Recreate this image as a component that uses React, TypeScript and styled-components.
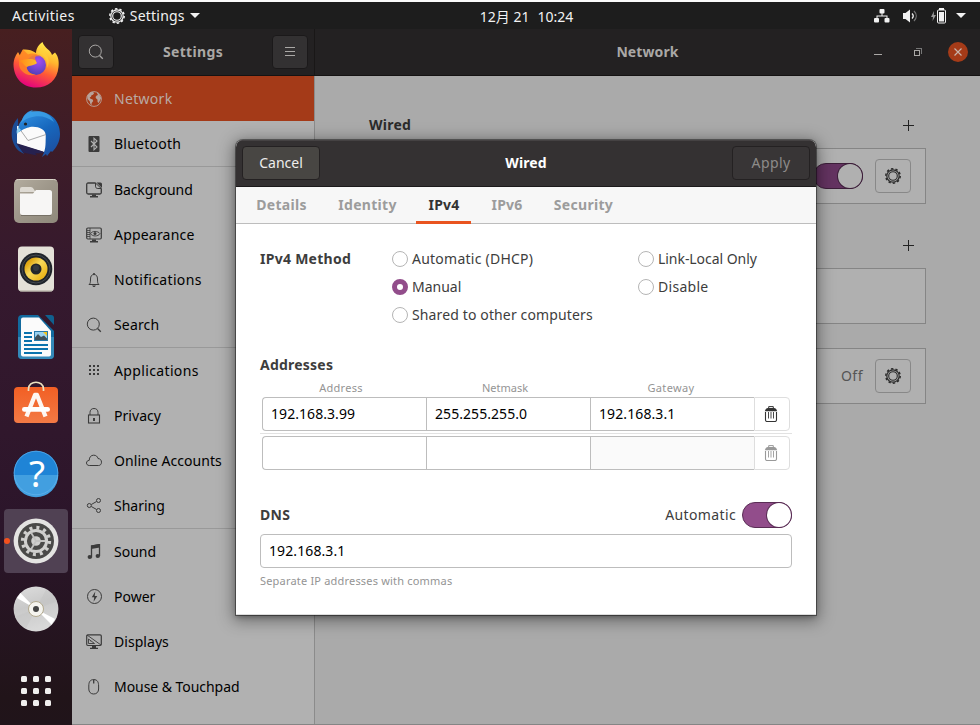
import React from 'react';
import styled, { createGlobalStyle, css } from 'styled-components';

const Global = createGlobalStyle`
  * { box-sizing: border-box; }
  html, body { margin: 0; padding: 0; }
  body {
    width: 980px; height: 725px; overflow: hidden; background: #fafafa;
    font-family: "Noto Sans", "Noto Sans CJK SC", sans-serif;
    font-size: 14px; line-height: 20px; color: #000;
  }
  svg { display: block; flex: none; }
`;

/* ---------- shared text ---------- */
const Text = styled.span<{ $track?: number }>`
  white-space: pre;
  letter-spacing: ${p => p.$track ?? 0}px;
`;
const Strong = styled(Text)`font-weight: 700;`;

/* ---------- shell ---------- */
const Desktop = styled.div`
  width: 980px; height: 725px; padding-top: 2px; position: relative; overflow: hidden;
  display: flex; flex-direction: column;
`;
const TopBar = styled.header`
  flex: none; height: 27px; background: #1d1d1d; color: #f2f2f2;
  display: grid; grid-template-columns: 1fr auto 1fr; align-items: center;
  padding: 0 14px 0 12px;
`;
const BarLeft = styled.div`display: flex; align-items: center;`;
const AppMenu = styled.div`display: flex; align-items: center; gap: 5px; margin-left: 34px;`;
const Clock = styled.div`display: flex; gap: 8px; padding: 2px 0 0 75px;`;
const BarRight = styled.div`display: flex; align-items: center; justify-content: flex-end;`;
const Tray = styled.div<{ $gap: number }>`margin-left: ${p => p.$gap}px;`;

const Workspace = styled.div`flex: 1; min-height: 0; display: flex;`;
const Dock = styled.nav`
  flex: none; width: 72px; padding: 2px 0 0; display: flex; flex-direction: column; align-items: center;
  background: linear-gradient(180deg, #471f20 0%, #3d1c28 17%, #35192e 36%, #30172c 58%, #2b152a 72%, #211419 96%, #20141a 100%);
`;
const DockSlot = styled.div`width: 72px; height: 68px; display: flex; align-items: center; justify-content: center; position: relative;`;
const DockTile = styled.div<{ $active?: boolean }>`
  width: 64px; height: 64px; border-radius: 4px;
  background: ${p => (p.$active ? '#504153' : 'transparent')};
`;
const RunDot = styled.i`
  position: absolute; left: 4px; top: 31px; width: 6px; height: 6px; border-radius: 50%; background: #f4511e;
`;
const AppsGrid = styled.div`
  display: grid; grid-template-columns: repeat(3, 6px); gap: 6px; margin-top: 33px;
`;
const AppsDot = styled.i`width: 6px; height: 6px; border-radius: 1.5px; background: #f0efee;`;

/* ---------- settings window ---------- */
const Window = styled.div`flex: 1; min-width: 0; display: flex; flex-direction: column; border-bottom: 1px solid #858585;`;
const HeaderBar = styled.div`
  flex: none; height: 47px; display: flex; background: #232122; color: #aaa8a6; border-bottom: 1px solid #151313;
`;
const SideHeader = styled.div`
  width: 243px; display: flex; align-items: center; justify-content: space-between; padding: 0 7px;
  border-right: 1px solid #191717;
`;
const HeaderButton = styled.div`
  width: 34px; height: 32px; border-radius: 4px; background: #333132; border: 1px solid #1b191a;
  box-sizing: content-box; display: grid; place-items: center; margin: 0 -1px;
`;
const MainHeader = styled.div`flex: 1; display: grid; grid-template-columns: 1fr auto 1fr; align-items: center;`;
const WindowButtons = styled.div`display: flex; align-items: center; justify-content: flex-end; gap: 32px; padding-right: 12px;`;
const CloseButton = styled.div`
  width: 20px; height: 20px; border-radius: 50%; background: #a53b18; display: grid; place-items: center; margin-left: -6px;
`;
const WindowBody = styled.div`flex: 1; min-height: 0; display: flex;`;
const Sidebar = styled.div`width: 243px; background: #b1b1b1; border-right: 1px solid #8b8b8b; overflow: hidden;`;
const SideRow = styled.div<{ $selected?: boolean; $sep?: boolean }>`
  height: ${p => (p.$sep ? 46 : 45)}px; display: flex; align-items: center; gap: 12px; padding-left: 14px;
  ${p => p.$selected && css`background: #a43a18; color: #b9aaa4;`}
  ${p => p.$sep && css`border-bottom: 1px solid #999;`}
`;
const Content = styled.div`flex: 1; background: #aaa; padding: 0 54px; color: #2b2b2b;`;
const SectionHead = styled.div<{ $h: number }>`
  height: ${p => p.$h}px; display: flex; justify-content: space-between; align-items: flex-end; padding: 0 12px 13px 0;
`;
const Panel = styled.div<{ $gap?: number }>`
  height: 56px; border: 1px solid #858585; background: #b0b0b0; margin-top: ${p => p.$gap ?? 0}px;
  display: flex; align-items: center; justify-content: flex-end; padding-right: 14px; gap: 12px; color: #555;
`;
const GearButton = styled.div`
  width: 36px; height: 34px; border: 1px solid #888; border-radius: 4px; display: grid; place-items: center; color: #2b2b2b;
`;
const Toggle = styled.div<{ $dim?: boolean }>`
  width: 50px; height: 26px; border-radius: 13px; border: 1px solid ${p => (p.$dim ? '#3c1e39' : '#5a2d55')};
  background: ${p => (p.$dim ? '#643361' : '#924d8b')}; display: flex; justify-content: flex-end;
`;
const Knob = styled.div<{ $dim?: boolean }>`
  width: 24px; height: 24px; border-radius: 50%; background: ${p => (p.$dim ? '#b0b0b0' : '#fff')};
  box-shadow: 0 0 0 1px ${p => (p.$dim ? '#3c1e39' : '#5a2d55')};
`;

/* ---------- dialog ---------- */
const Dialog = styled.section`
  position: absolute; left: 236px; top: 140px; width: 580px; height: 475px; background: #fff;
  border-radius: 7px 7px 0 0; overflow: hidden; color: #3d3d3d; display: flex; flex-direction: column;
  border-bottom: 1px solid #ddd;
`;
const DialogShadow = styled.div`
  position: absolute; left: 236px; top: 140px; width: 580px; height: 475px; border-radius: 7px 7px 0 0;
  box-shadow: 0 0 0 1px rgba(0,0,0,.4), 0 3px 16px 3px rgba(0,0,0,.38), 0 2px 5px rgba(0,0,0,.25);
`;
const DialogHeader = styled.div`
  flex: none; height: 47px; background: #343132; border-bottom: 1px solid #1c1a1b; color: #fff;
  display: grid; grid-template-columns: 1fr auto 1fr; align-items: center; padding: 0 6px;
  box-shadow: inset 0 1px #454243;
`;
const DialogButton = styled.div<{ $disabled?: boolean }>`
  width: 78px; height: 34px; border-radius: 4px; display: grid; place-items: center;
  background: #484643; border: 1px solid #242122; color: #eeedeb;
  ${p => p.$disabled && css`background: #383536; color: #8d8b89; justify-self: end;`}
`;
const Tabs = styled.div`
  flex: none; height: 37px; background: #f7f7f7; border-bottom: 1px solid #bdbdbd; display: flex; padding-left: 8px; gap: 8px;
`;
const Tab = styled.div<{ $w: number; $on?: boolean }>`
  width: ${p => p.$w}px; height: 37px; display: flex; justify-content: center; padding: 8px 0 0 1px; color: #9c9c9c;
  ${p => p.$on && css`color: #333; border-bottom: 3px solid #e95420;`}
`;
const DialogBody = styled.div`padding: 21px 24px 0;`;
const MethodGrid = styled.div`display: grid; grid-template-columns: 132px 246px 1fr; grid-auto-rows: 28px; align-items: center;`;
const RadioRow = styled.div`display: flex; align-items: center; gap: 4px; white-space: nowrap;`;
const RadioMark = styled.div<{ $on?: boolean }>`
  width: 16px; height: 16px; border-radius: 50%; border: 1px solid #b5b5b5; background: #fff;
  ${p => p.$on && css`border: 5.5px solid #924d8b;`}
`;
const BlockTitle = styled.div`height: 20px; margin-top: 26px;`;
const ColumnHeads = styled.div`
  display: grid; grid-template-columns: 164px 164px 168px; text-align: center; font-size: 11px; line-height: 16px;
  color: #949494; margin: 5px 0 1px -1px;
`;
const AddressRow = styled.div`display: grid; grid-template-columns: 164px 164px 164px 36px; height: 34px; margin-left: 2px;`;
const Cell = styled.div<{ $first?: boolean; $muted?: boolean }>`
  border: 1px solid #bdbdbd; border-right: 0; padding: 6px 8px; color: #000; background: ${p => (p.$muted ? '#fafafa' : '#fff')};
  border-radius: ${p => (p.$first ? '4px 0 0 4px' : '0')};
`;
const DeleteButton = styled.div<{ $muted?: boolean }>`
  border: 1px solid #dedede; border-radius: 0 4px 4px 0; display: grid; place-items: center; padding-right: 2px;
  color: ${p => (p.$muted ? '#999' : '#333')};
`;
const RowRule = styled.div`height: 1px; background: #e2e2e2; margin: 2px 0;`;
const DnsHead = styled.div`display: flex; align-items: center; justify-content: space-between; height: 26px; margin-top: 32px;`;
const AutoRow = styled.div`display: flex; align-items: center; gap: 6px;`;
const Entry = styled.div`height: 34px; margin-top: 6px; border: 1px solid #bdbdbd; border-radius: 4px; padding: 6px 8px; color: #000;`;
const Hint = styled.div`margin-top: 5px; font-size: 11px; line-height: 16px; color: #949494;`;

/* ---------- symbolic icons ---------- */
const Svg16 = ({ children, size = 16 }: { children: React.ReactNode; size?: number }) => (
  <svg width={size} height={size} viewBox="0 0 16 16" fill="none" stroke="currentColor" strokeWidth="1">{children}</svg>
);
const GearIcon = () => (
  <Svg16>
    <circle cx="8" cy="8" r="7.200" strokeWidth="1.500" strokeDasharray="2.400 2.124" />
    <circle cx="8" cy="8" r="6.200" strokeWidth="1.200" />
    <circle cx="8" cy="8" r="4.300" strokeWidth="1.100" />
  </Svg16>
);
const CaretDown = () => <svg width="10" height="5" viewBox="0 0 10 5" fill="#f2f2f2"><path d="M0 0h10L5 5z" /></svg>;
const PlusIcon = () => <svg width="11" height="11" viewBox="0 0 11 11" stroke="#222" shapeRendering="crispEdges"><path d="M5.5 0v11M0 5.5h11" /></svg>;
const TrashIcon = () => (
  <Svg16>
    <path d="M5.700 2.500V.6h4.600v1.900" />
    <path d="M2.500 6v8c0 1 .5 1.500 1.500 1.500h8c1 0 1.500-.5 1.500-1.500V6" strokeWidth="1.100" />
    <path d="M1.800 5.200C2.500 3 3.500 2 5 2h6c1.500 0 2.500 1 3.200 3.200z" fill="currentColor" stroke="none" />
    <path d="M5.500 6v6.500M8 6v6.500M10.500 6v6.500" strokeWidth=".9" />
  </Svg16>
);
const SearchIcon = () => <Svg16><circle cx="7.300" cy="7.100" r="6" /><path d="M11.500 11.500l3.300 3.300" strokeWidth="1.300" /></Svg16>;

const IconInk = styled.span<{ $light?: boolean }>`color: ${p => (p.$light ? '#b8a39b' : '#3b3b3b')}; display: block;`;

const icons: Record<string, React.ReactNode> = {
  network: (
    <Svg16>
      <circle cx="8" cy="8" r="7.400" strokeWidth=".9" />
      <path fill="currentColor" stroke="none" d="M1.200 5.500C2.200 3 4 1.300 6.500.8L8.200 2 7 3.700 5.500 4.200 5 5.700 3.700 6.500 4.500 7.800l2.200.7L7.200 10l-1.500 2-.3 2.500-1.200-2L3.700 10.300 1.500 8zM10.500 1.200l2.500 1.500 2.200 4.200L14 9.200l-1.300 2.800-1.100-1-.2-2.500L10.200 7.500 9.500 6 10.700 4.500 12 4z" />
    </Svg16>
  ),
  bluetooth: (
    <Svg16>
      <rect x="2.500" y="0" width="11" height="16" rx="1" fill="currentColor" stroke="none" />
      <path d="M5 5l6 6-3 2.800V2.200L11 5l-6 6" stroke="#b1b1b1" strokeWidth="1.100" />
    </Svg16>
  ),
  background: (
    <Svg16>
      <path d="M9.500 1H2.200C1.300 1 .7 1.600.7 2.500v8c0 .9.600 1.500 1.500 1.500h11.600c.9 0 1.500-.6 1.500-1.500V6.500" strokeWidth="1.300" />
      <path d="M9.500 1v3.200c0 1.300.7 2.300 2.300 2.300h3.500z" fill="#b1b1b1" /><path d="M10.500.5H14.500Q16 .5 16 2V6z" fill="currentColor" stroke="none" />
      <path d="M6 12.500h4v1.500h2v1.500H4V14h2z" fill="currentColor" stroke="none" />
    </Svg16>
  ),
  appearance: (
    <Svg16>
      <rect x=".7" y="1" width="14.600" height="11" rx="1.200" strokeWidth="1.200" />
      <path d="M1 3.500h3M1 5.500h3M1 7.500h3M1 9.500h3M4 1v11" strokeWidth=".8" />
      <path d="M4.500 6.700C6 3.700 12 3.700 14 6.700c-2 3-7.500 3-9.500 0z" strokeWidth=".9" /><circle cx="9" cy="6.500" r="1.500" fill="currentColor" stroke="none" />
      <path d="M6 12.500h4v1.500h2v1.500H4V14h2z" fill="currentColor" stroke="none" />
    </Svg16>
  ),
  notifications: (
    <Svg16>
      <path d="M3 12.500c1.300-1 1.500-2 1.500-5.500 0-3 1.300-4.500 3.500-4.500s3.500 1.500 3.500 4.500c0 3.500.2 4.500 1.500 5.500z" />
      <path d="M8 1v1.500" strokeWidth="1.600" /><path d="M6 13.500h4L8.700 15H7.300z" fill="currentColor" stroke="none" />
    </Svg16>
  ),
  search: <SearchIcon />,
  applications: (
    <Svg16>
      {[3, 7, 11].map(x => [2, 6, 10].map(y => <rect key={`${x}-${y}`} x={x} y={y} width="2" height="2" fill="currentColor" stroke="none" />))}
    </Svg16>
  ),
  privacy: (
    <Svg16><rect x="2.500" y="7" width="11" height="8" strokeWidth="1.100" /><path d="M4 7V4.500C4 2 5.500.5 8 .5s4 1.500 4 4V7" /><rect x="7" y="10" width="2" height="3" fill="currentColor" stroke="none" /></Svg16>
  ),
  cloud: (
    <Svg16><path d="M3.300 12.500C1.500 12.500.5 11.300.5 10c0-1.500 1-2.500 2.700-2.600C3.300 4 5 2.200 7.700 2.200c2.300 0 3.800 1.200 4.300 3.300 2.200.2 3.500 1.600 3.500 3.700 0 2-1.200 3.300-3 3.300z" /></Svg16>
  ),
  sharing: (
    <Svg16><circle cx="3.300" cy="7.500" r="2" /><circle cx="12.500" cy="2.500" r="2" /><circle cx="12.500" cy="12.500" r="2" /><path d="M5.300 6.500l5.300-3M5.300 8.500l5.300 3" /></Svg16>
  ),
  sound: (
    <Svg16><path d="M5.500 13.500V2l8-1.500V12" strokeWidth="1.300" /><path d="M5 1.500L14 0v3.500L5 5z" fill="currentColor" stroke="none" /><ellipse cx="3.800" cy="13" rx="2.200" ry="1.900" fill="currentColor" stroke="none" /><ellipse cx="11.800" cy="12" rx="2.200" ry="1.900" fill="currentColor" stroke="none" /></Svg16>
  ),
  power: (
    <Svg16><circle cx="8.500" cy="7.500" r="7" /><path d="M9.300 2.500L5.800 8.300h2.400l-.6 4.500 3.700-5.900H8.700z" fill="currentColor" stroke="none" /></Svg16>
  ),
  displays: (
    <Svg16>
      <rect x=".7" y=".8" width="14.600" height="10.700" rx="1.200" strokeWidth="1.200" />
      <path d="M1 1l14 10M2.500 5v4.500h6zM4.500 7.700v.3" strokeWidth=".9" /><path d="M6 12h4v1.800h2V15H4v-1.200h2z" fill="currentColor" stroke="none" />
    </Svg16>
  ),
  mouse: (
    <Svg16><path d="M2.800 7C2.800 3 4 .6 7.700.6S12.600 3 12.600 7v3c0 3-1.900 5-4.900 5s-4.900-2-4.900-5z" /><path d="M7.700.6v4" strokeWidth="1.300" /></Svg16>
  ),
};

const sideItems: { icon: string; label: string; track: number; sep?: boolean; selected?: boolean }[] = [
  { icon: 'network', label: 'Network', track: 0.3, selected: true },
  { icon: 'bluetooth', label: 'Bluetooth', track: 0.24, sep: true },
  { icon: 'background', label: 'Background', track: -0.1 },
  { icon: 'appearance', label: 'Appearance', track: 0.2 },
  { icon: 'notifications', label: 'Notifications', track: 0.34 },
  { icon: 'search', label: 'Search', track: 0.15, sep: true },
  { icon: 'applications', label: 'Applications', track: 0.36 },
  { icon: 'privacy', label: 'Privacy', track: 0.05 },
  { icon: 'cloud', label: 'Online Accounts', track: 0.06 },
  { icon: 'sharing', label: 'Sharing', track: 0, sep: true },
  { icon: 'sound', label: 'Sound', track: 0 },
  { icon: 'power', label: 'Power', track: 0 },
  { icon: 'displays', label: 'Displays', track: 0.05 },
  { icon: 'mouse', label: 'Mouse & Touchpad', track: -0.05 },
];

/* ---------- dock icons ---------- */
const DockSvg = ({ children }: { children: React.ReactNode }) => <svg width="64" height="64" viewBox="-32 -32 64 64">{children}</svg>;

const Firefox = () => (
  <DockSvg>
    <defs>
      <linearGradient id="ffBody" x1=".75" y1="0" x2=".35" y2="1"><stop offset="0" stopColor="#fff44f" /><stop offset=".35" stopColor="#ffb52e" /><stop offset=".62" stopColor="#ff5a36" /><stop offset="1" stopColor="#e3007f" /></linearGradient>
      <radialGradient id="ffCore" cx=".6" cy=".3" r=".7"><stop offset="0" stopColor="#a44cf5" /><stop offset="1" stopColor="#5340b8" /></radialGradient>
      <linearGradient id="ffHead" x1="0" y1="0" x2="1" y2="0"><stop offset="0" stopColor="#ff8a16" /><stop offset="1" stopColor="#ffbd2b" /></linearGradient>
    </defs>
    <path fill="url(#ffBody)" d="M-13-15.500C-9-16-4-15-0-12 .2-17 3-20.500 6.500-23 8-17 15-15 16-10l3-2.500c4 4 4 11 3.500 14.500C21.500 15 12 22.500 0 22.500-14 22.500-22.500 12-22.500-1-22-7-20-10-18-13l2 3.500 3-6z" />
    <circle cx="0" cy="0" r="10" fill="url(#ffCore)" />
    <path fill="#ff8524" d="M-13-15.500l5 5c4-2 9-1 12 2-5-1-6 1-4 4-2 2.500-7 2-9 5-1 5 3 9 9 9-9 3-18-4-17-12 0-6 1-9 4-13z" opacity=".85" />
    <path fill="url(#ffHead)" d="M-17-4c6-2 12-3 16.500-.5L1-2C-2 1-7 0-9 2c-3-1-4-5-8-6z" />
    <path fill="#ffd43a" d="M1-12C9-10 12-4 11 3c3-5 2-10-1-14l-2-8z" opacity=".55" />
  </DockSvg>
);
const Thunderbird = () => (
  <DockSvg>
    <defs><linearGradient id="tbBody" x1=".2" y1="0" x2=".7" y2="1"><stop offset="0" stopColor="#2f8fe0" /><stop offset=".5" stopColor="#1767bd" /><stop offset="1" stopColor="#1c4fa0" /></linearGradient></defs>
    <path fill="#1b4c96" d="M-18-15C-27-6-26 10-17 18l5 3-5-8z" />
    <path fill="#fafafa" d="M-19-7L9-8l2 26-3 1-27-8z" />
    <path fill="#26214f" d="M-20 10L7 18.500l1 1.500-9 .5 2 2-14-3z" />
    <path d="M-17-5l9 12.500 18-6" fill="none" stroke="#aaa" strokeWidth="1" />
    <path fill="url(#tbBody)" d="M-14-13C-12-19-8-22-3-23l-2 2C11-24 24-15 24 1c0 8-4 14-8 18l-1-1-4 5-1-2-4 3C11 15 9 8 10 2 9-4 2-7-6-6c-4 1-6 2-11 5-1-4-1-8 3-12z" />
    <path fill="#44aef0" d="M-4-22C8-23 15-18 18-11 10-17 2-18-7-15c-4 1-6 3-8 5 1-6 6-11 11-12z" opacity=".6" />
    <path fill="#8dcff0" d="M-17-5c-2 0-3 3-2 6l4-4z" /><circle cx="-10.500" cy="-9" r="1.600" fill="#222" />
  </DockSvg>
);
const Files = () => (
  <DockSvg>
    <defs><linearGradient id="flBg" x1="0" y1="0" x2="1" y2="1"><stop offset="0" stopColor="#b3ac9f" /><stop offset=".5" stopColor="#9d9689" /><stop offset="1" stopColor="#8f897b" /></linearGradient></defs>
    <rect x="-22" y="-22" width="44" height="44" rx="5" fill="url(#flBg)" />
    <path d="M-20.500-20.500Q-19.500-21.500-17.500-21.500H17.500Q19.500-21.500 20.500-20.500" stroke="#dad5c9" fill="none" />
    <path d="M-16-12q0-2 2-2h9q2 0 3 2.500L-.5-9H-16z" fill="#dedad3" />
    <path d="M-16-7.500h13l3-3.500H13.500q2.500 0 2.500 2.500v20q0 2.500-2.500 2.500h-27q-2.500 0-2.500-2.500z" fill="#f7f6f5" />
    <path d="M-15 14.500h30" stroke="#777166" />
  </DockSvg>
);
const Rhythmbox = () => (
  <DockSvg>
    <defs><linearGradient id="rbCone" x1="0" y1="0" x2="1" y2="1"><stop offset=".2" stopColor="#e0a713" /><stop offset=".45" stopColor="#f7da5b" /><stop offset=".8" stopColor="#ecb91f" /></linearGradient></defs>
    <rect x="-18" y="-22.500" width="36" height="45" rx="4" fill="#e4e1d8" /><path d="M-16 22h32" stroke="#aaa59a" />
    <circle r="16.300" fill="#20242a" /><circle r="14" fill="none" stroke="#444a50" />
    <circle r="11.500" fill="url(#rbCone)" /><circle r="5.500" fill="#22262b" /><circle cy="-1" r="3" fill="#343a40" />
  </DockSvg>
);
const Writer = () => (
  <DockSvg>
    <path d="M-14-22H2L18-6V18q0 4-4 4h-28q-4 0-4-4V-18q0-4 4-4z" fill="#126a9e" />
    <path d="M-18 0h36v18q0 4-4 4h-28q-4 0-4-4z" fill="#3489b9" />
    <path d="M-13-19.500H3L15-6V17.500q0 2-2 2h-26q-2 0-2-2v-35q0-2 2-2z" fill="#fbfbfb" />
    <path d="M9-22h6q3 0 3 3v7z" fill="#10618f" />
    <path d="M-12-4h8M-12 0h8M-12 4h8M-12 8H12M-12 12H12M-12 16H6" stroke="#0b73ae" strokeWidth="1.800" />
    <rect x="-1.500" y="-5.500" width="13" height="9" fill="#9ad2f1" stroke="#2779aa" /><path d="M7-5h4v4z" fill="#f5c51c" /><path d="M-1 3v-2.500L2-3l3 3 3-1.500 3 3v1.500z" fill="#40515b" />
  </DockSvg>
);
const Software = () => (
  <DockSvg>
    <defs><linearGradient id="swBg" x1="0" y1="0" x2="0" y2="1"><stop offset="0" stopColor="#f25f24" /><stop offset="1" stopColor="#f37a45" /></linearGradient></defs>
    <rect x="-22" y="-18" width="44" height="36" rx="4" fill="url(#swBg)" />
    <path d="M-7.500-14v-2C-7.500-25 7.500-25 7.500-16v2" fill="none" stroke="#ece2c0" strokeWidth="1.700" />
    <path d="M-9.500 11.500L-1-10h2L9.500 11.500" fill="none" stroke="#fdf6f2" strokeWidth="4.300" strokeLinejoin="round" />
    <rect x="-14" y="2" width="28" height="4.800" rx="2.400" fill="#fff" />
  </DockSvg>
);
const HelpMark = styled.text`font: 400 37px "Noto Sans", sans-serif; fill: #fff; text-anchor: middle;`;
const Help = () => (
  <DockSvg>
    <circle r="22.300" fill="#1f84d6" /><path d="M-22.300 2h44.600A22.300 22.300 0 0 1-22.300 2z" fill="#429fe0" />
    <circle r="21.800" fill="none" stroke="#6bb8ee" opacity=".6" />
    <HelpMark x="1" y="13.500">?</HelpMark>
  </DockSvg>
);
const SettingsGear = () => (
  <DockSvg>
    <circle r="22.400" fill="#e4e4e2" /><circle r="18" fill="#4a4a48" />
    <circle r="13.400" fill="none" stroke="#d0d0ce" strokeWidth="3.500" strokeDasharray="3 4.016" />
    <circle r="10.600" fill="none" stroke="#d0d0ce" strokeWidth="3" />
    <circle r="4.800" fill="#d0d0ce" /><path d="M0 0h9M0 0l-5 8.500M0 0l-5-8.500" stroke="#c2c2c0" strokeWidth="1.800" />
  </DockSvg>
);
const Disc = () => (
  <DockSvg>
    <defs><linearGradient id="dcBg" x1="0" y1="0" x2=".3" y2="1"><stop offset="0" stopColor="#dedede" /><stop offset=".5" stopColor="#c9c9c9" /><stop offset="1" stopColor="#d8d8d8" /></linearGradient></defs>
    <circle r="22.400" fill="url(#dcBg)" /><path d="M0 0L-19-11l3.500-5zM0 0l19 10-3.500 5.500z" fill="#fff" />
    <path d="M0 0L10-19.500a22 22 0 0 1 11 12zM0 0l-10 19.500a22 22 0 0 1-11-12z" fill="#c1c1c1" opacity=".35" />
    <circle r="7.500" fill="#f5f4ef" stroke="#b2a98e" /><circle r="3" fill="#454545" />
  </DockSvg>
);

const dockApps = [Firefox, Thunderbird, Files, Rhythmbox, Writer, Software, Help, SettingsGear, Disc];

const PlusBox = styled.div`height: 20px; display: flex; align-items: center;`;
const AddButton = () => <PlusBox><PlusIcon /></PlusBox>;

const Radio = ({ label, on, track }: { label: string; on?: boolean; track?: number }) => (
  <RadioRow><RadioMark $on={on} /><Text $track={track}>{label}</Text></RadioRow>
);

export default function App() {
  return (
    <>
      <Global />
      <Desktop>
        <TopBar>
          <BarLeft>
            <Text $track={0.45}>Activities</Text>
            <AppMenu><GearIcon /><Text $track={0.2}>Settings</Text><CaretDown /></AppMenu>
          </BarLeft>
          <Clock><Text>12月 21</Text><Text>10:24</Text></Clock>
          <BarRight>
            <Tray $gap={0}>
              <svg width="16" height="14" viewBox="0 0 16 14" fill="#f2f2f2"><rect x="5.500" y="0" width="5" height="4.500" rx="1" /><rect x="0" y="9" width="5" height="4.500" rx="1" /><rect x="10.500" y="9" width="5" height="4.500" rx="1" /><path d="M7.500 4h1v2.500h5V9h-1V7.500h-9V9h-1V6.500h5z" /></svg>
            </Tray>
            <Tray $gap={13}>
              <svg width="16" height="14" viewBox="0 0 16 14" fill="none" stroke="#f2f2f2"><path d="M0 4h2.500L7 .5v13L2.500 10H0z" fill="#f2f2f2" stroke="none" /><path d="M9 4.500c1.500 1.500 1.500 3.500 0 5" strokeWidth="1.300" /><path d="M11 2c3 3 3 7 0 10" stroke="#777" strokeWidth="1.200" /></svg>
            </Tray>
            <Tray $gap={12}>
              <svg width="15" height="16" viewBox="0 0 15 16" fill="none"><path d="M3 3L0 9h2l-.5 4L5 7H2.800z" fill="#999" /><rect x="6.500" y="2" width="8" height="13" rx="1" stroke="#f2f2f2" /><path d="M8 0h5v2H8zM8 4h5v9.500H8z" fill="#f2f2f2" /></svg>
            </Tray>
            <Tray $gap={10}><CaretDown /></Tray>
          </BarRight>
        </TopBar>
        <Workspace>
          <Dock>
            {dockApps.map((Icon, i) => (
              <DockSlot key={i}><DockTile $active={i === 7}><Icon /></DockTile>{i === 7 && <RunDot />}</DockSlot>
            ))}
            <AppsGrid>{Array.from({ length: 9 }, (_, i) => <AppsDot key={i} />)}</AppsGrid>
          </Dock>
          <Window>
            <HeaderBar>
              <SideHeader>
                <HeaderButton><SearchIcon /></HeaderButton>
                <Strong $track={0.35}>Settings</Strong>
                <HeaderButton><svg width="10" height="10" viewBox="0 0 10 10" stroke="#aaa8a6" shapeRendering="crispEdges"><path d="M0 .5h10M0 4.500h10M0 8.500h10" /></svg></HeaderButton>
              </SideHeader>
              <MainHeader>
                <span />
                <Strong $track={0.1}>Network</Strong>
                <WindowButtons>
                  <svg width="8" height="10" viewBox="0 0 8 10" stroke="#aaa8a6" shapeRendering="crispEdges"><path d="M0 7.500h8" /></svg>
                  <svg width="8" height="8" viewBox="0 0 8 8" fill="none" shapeRendering="crispEdges"><path d="M2 .5h5.500V6" stroke="#777" /><rect x=".5" y="2.500" width="5" height="5" stroke="#aaa8a6" /></svg>
                  <CloseButton><svg width="8" height="8" viewBox="0 0 8 8" stroke="#c8b4ab" strokeWidth="1.200"><path d="M.5.5l7 7M7.500.5l-7 7" /></svg></CloseButton>
                </WindowButtons>
              </MainHeader>
            </HeaderBar>
            <WindowBody>
              <Sidebar>
                {sideItems.map(it => (
                  <SideRow key={it.label} $selected={it.selected} $sep={it.sep}>
                    <IconInk $light={it.selected}>{icons[it.icon]}</IconInk>
                    <Text $track={it.track}>{it.label}</Text>
                  </SideRow>
                ))}
              </Sidebar>
              <Content>
                <SectionHead $h={72}><Strong $track={0.25}>Wired</Strong><AddButton /></SectionHead>
                <Panel><Toggle $dim><Knob $dim /></Toggle><GearButton><GearIcon /></GearButton></Panel>
                <SectionHead $h={64}><span /><AddButton /></SectionHead>
                <Panel />
                <Panel $gap={24}><Text $track={0.5}>Off</Text><GearButton><GearIcon /></GearButton></Panel>
              </Content>
            </WindowBody>
          </Window>
        </Workspace>
        <DialogShadow />
        <Dialog>
          <DialogHeader>
            <DialogButton><Text>Cancel</Text></DialogButton>
            <Strong $track={0.1}>Wired</Strong>
            <DialogButton $disabled><Text $track={0.4}>Apply</Text></DialogButton>
          </DialogHeader>
          <Tabs>
            <Tab $w={74}><Strong $track={0.3}>Details</Strong></Tab>
            <Tab $w={82}><Strong $track={0.3}>Identity</Strong></Tab>
            <Tab $w={55} $on><Strong $track={0.2}>IPv4</Strong></Tab>
            <Tab $w={55}><Strong $track={0.2}>IPv6</Strong></Tab>
            <Tab $w={82}><Strong $track={0.3}>Security</Strong></Tab>
          </Tabs>
          <DialogBody>
            <MethodGrid>
              <Strong $track={0.27}>IPv4 Method</Strong><Radio label="Automatic (DHCP)" track={0.24} /><Radio label="Link-Local Only" track={-0.05} />
              <span /><Radio label="Manual" on /><Radio label="Disable" track={0.28} />
              <span /><Radio label="Shared to other computers" track={0.13} />
            </MethodGrid>
            <BlockTitle><Strong $track={0.22}>Addresses</Strong></BlockTitle>
            <ColumnHeads><Text $track={0.3}>Address</Text><Text>Netmask</Text><Text $track={0.35}>Gateway</Text></ColumnHeads>
            <AddressRow>
              <Cell $first><Text $track={0.06}>192.168.3.99</Text></Cell><Cell><Text $track={0.06}>255.255.255.0</Text></Cell><Cell><Text $track={0.1}>192.168.3.1</Text></Cell>
              <DeleteButton><TrashIcon /></DeleteButton>
            </AddressRow>
            <RowRule />
            <AddressRow>
              <Cell $first /><Cell /><Cell $muted /><DeleteButton $muted><TrashIcon /></DeleteButton>
            </AddressRow>
            <DnsHead>
              <Strong $track={0.3}>DNS</Strong>
              <AutoRow><Text $track={0.38}>Automatic</Text><Toggle><Knob /></Toggle></AutoRow>
            </DnsHead>
            <Entry><Text $track={0.1}>192.168.3.1</Text></Entry>
            <Hint><Text $track={0.19}>Separate IP addresses with commas</Text></Hint>
          </DialogBody>
        </Dialog>
      </Desktop>
    </>
  );
}
